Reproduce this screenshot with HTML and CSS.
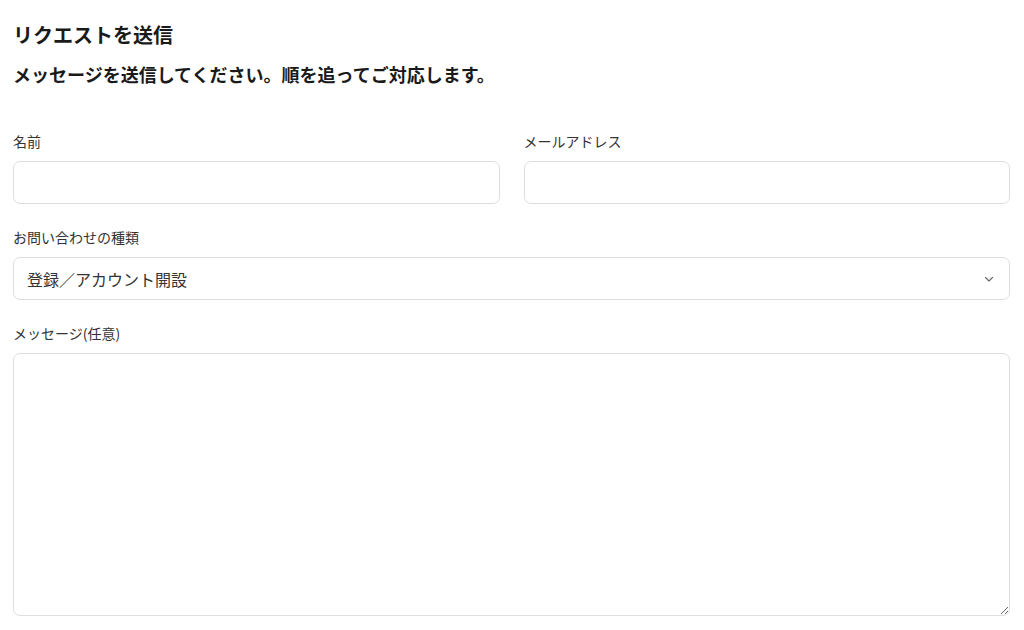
FILE: index.html
```html
<!DOCTYPE html>
<html lang="ja">
<head>
<meta charset="utf-8">
<link rel="stylesheet" href="styles.css">
</head>
<body>
<div class="page">
  <h1 class="title">リクエストを送信</h1>
  <p class="subtitle">メッセージを送信してください。順を追ってご対応します。</p>
  <form class="form">
    <div class="row">
      <div class="field">
        <label class="label">名前</label>
        <input class="input" type="text">
      </div>
      <div class="field">
        <label class="label">メールアドレス</label>
        <input class="input" type="email">
      </div>
    </div>
    <div class="field">
      <label class="label">お問い合わせの種類</label>
      <div class="select">
        <span class="select-value">登録／アカウント開設</span>
        <svg class="chevron" width="12" height="12" viewBox="0 0 12 12"><path d="M2.5 4.5 L6 8 L9.5 4.5" fill="none" stroke="#666" stroke-width="1.1" stroke-linecap="round" stroke-linejoin="round"/></svg>
      </div>
    </div>
    <div class="field">
      <label class="label">メッセージ(任意)</label>
      <textarea class="textarea"></textarea>
    </div>
  </form>
</div>
</body>
</html>
```
FILE: styles.css
```css
* { box-sizing: border-box; }
html, body { margin: 0; padding: 0; background: #fff; }
body {
  font-family: "Noto Sans CJK JP", "Noto Sans", sans-serif;
  color: #1a1a1a;
}
.page {
  padding: 21px 14px 0 13px;
}
.title {
  margin: 0;
  font-size: 20px;
  line-height: 28px;
  font-weight: 700;
}
.subtitle {
  margin: 13px 0 0;
  font-size: 18px;
  line-height: 24px;
  font-weight: 700;
}
.form {
  margin-top: 45px;
  display: flex;
  flex-direction: column;
  gap: 23px;
}
.row {
  display: grid;
  grid-template-columns: 1fr 1fr;
  gap: 24px;
}
.field {
  display: flex;
  flex-direction: column;
  gap: 10px;
}
.label {
  font-size: 14px;
  line-height: 20px;
  color: #333;
}
.input, .select, .textarea {
  border: 1px solid #dedede;
  border-radius: 7px;
  background: #fff;
  font-family: inherit;
  width: 100%;
}
.input {
  height: 43px;
  margin: 0;
  padding: 0 12px;
}
.select {
  height: 43px;
  display: flex;
  align-items: center;
  justify-content: space-between;
  padding: 0 14px 0 13px;
}
.select-value {
  font-size: 16px;
  color: #333;
}
.chevron { display: block; }
.textarea {
  height: 263px;
  margin: 0;
  resize: vertical;
  padding: 10px 12px;
  display: block;
}
```
